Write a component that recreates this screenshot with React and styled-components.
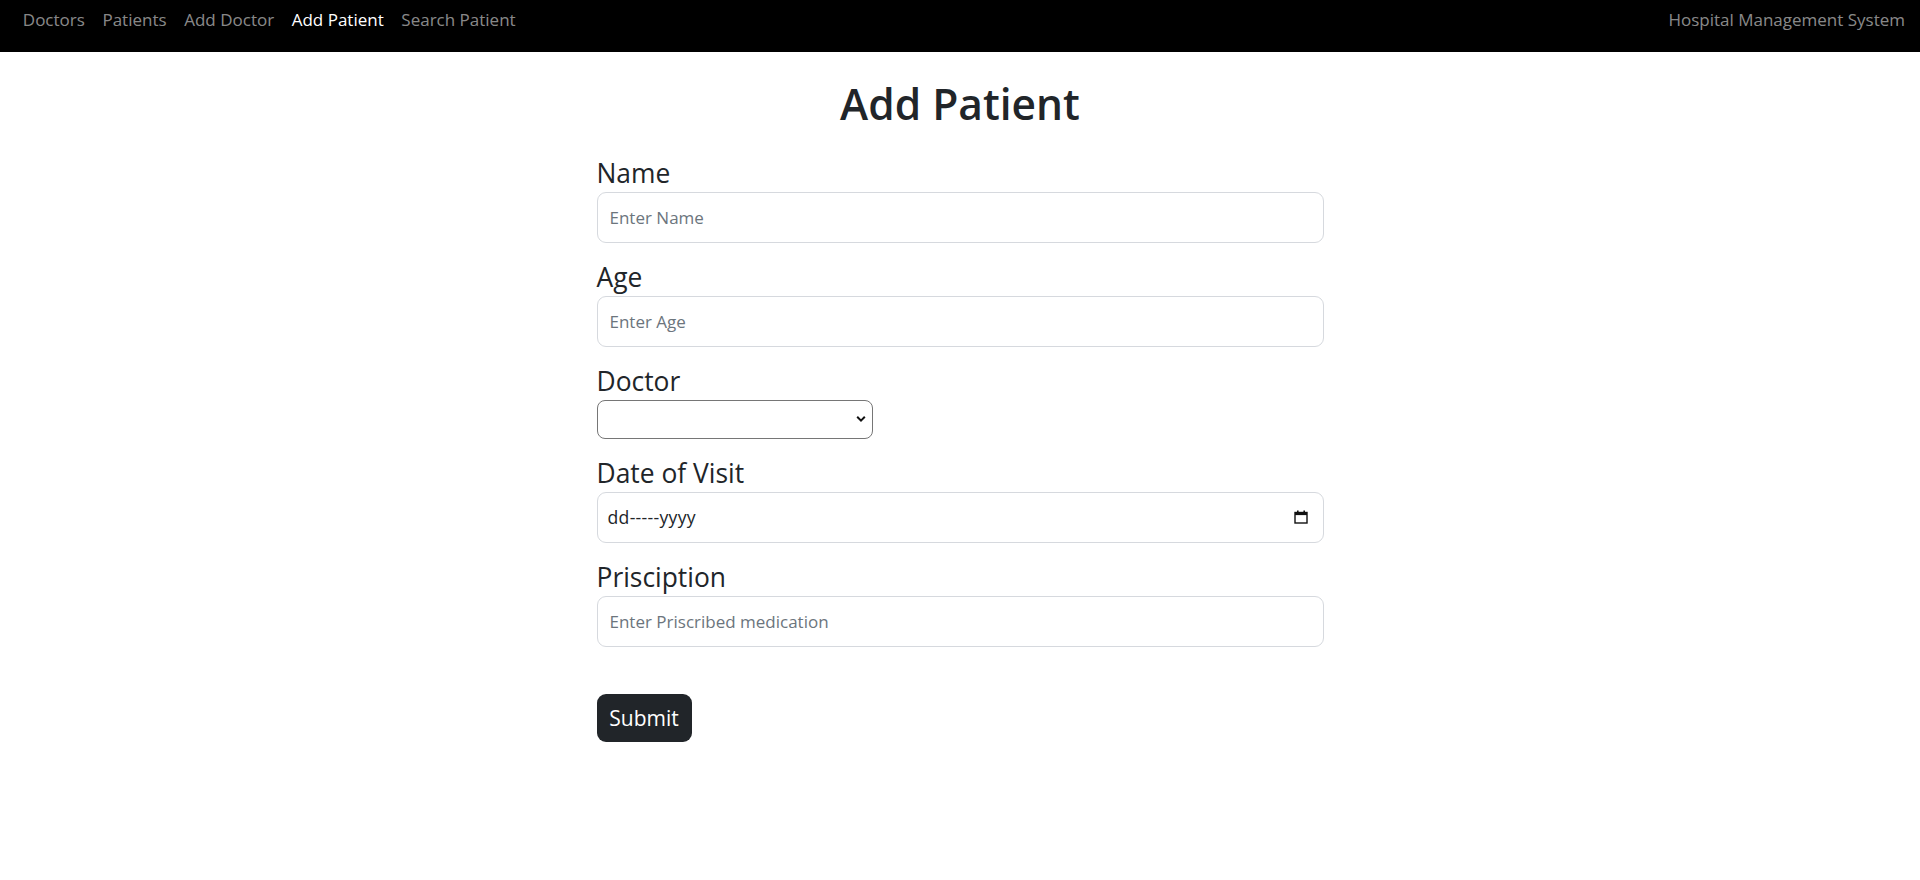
import React from 'react';
import styled, { createGlobalStyle } from 'styled-components';

const FONT = '"Open Sans", "Noto Sans", Arial, sans-serif';

const GlobalStyle = createGlobalStyle`
  * {
    box-sizing: border-box;
  }
  body {
    margin: 0;
    background: #fff;
    color: #212529;
    font-family: ${FONT};
  }
`;

const NavBar = styled.nav`
  height: 52px;
  background: #000;
  display: flex;
  justify-content: space-between;
  align-items: flex-start;
  padding: 7px 15px 0 14px;
  font-size: 17px;
  line-height: 26.4px;
`;

const NavList = styled.div`
  display: flex;
`;

const NavLink = styled.a`
  padding: 0 8.8px;
  color: ${(p) => (p.$active ? '#fff' : 'rgba(255, 255, 255, 0.55)')};
  text-decoration: none;
  cursor: pointer;
`;

const Brand = styled.span`
  color: rgba(255, 255, 255, 0.55);
`;

const Page = styled.main`
  width: 727px;
  margin: 0 auto;
`;

const Title = styled.h1`
  margin: 26px 0 26px;
  text-align: center;
  font-size: 42.5px;
  line-height: 52.8px;
  font-weight: 600;
  color: #212529;
`;

const Group = styled.div`
  margin-bottom: 18px;
`;

const Label = styled.label`
  display: block;
  font-size: 26.4px;
  line-height: 32px;
  margin-bottom: 3px;
  color: #212529;
`;

const TextInput = styled.input`
  display: block;
  width: 100%;
  height: 51px;
  padding: 0 12px;
  border: 1px solid #d6d9de;
  border-radius: 9px;
  font-family: ${FONT};
  font-size: 17px;
  color: #212529;
  outline: none;
  &::placeholder {
    color: #6c757d;
  }
`;

const SelectBox = styled.div`
  position: relative;
  width: 276px;
  height: 39px;
`;

const Select = styled.select`
  appearance: none;
  width: 100%;
  height: 100%;
  border: 1px solid #767676;
  border-radius: 8px;
  background: #fff;
  font-family: ${FONT};
  font-size: 17px;
  padding: 0 30px 0 8px;
  outline: none;
`;

const Chevron = styled.svg`
  position: absolute;
  right: 7px;
  top: 15px;
  width: 10px;
  height: 8px;
  pointer-events: none;
`;

const DateField = styled.div`
  display: flex;
  align-items: center;
  justify-content: space-between;
  height: 51px;
  padding: 0 15px 0 10px;
  border: 1px solid #d6d9de;
  border-radius: 9px;
  font-size: 17.6px;
  letter-spacing: 0.3px;
  color: #212529;
`;

const SubmitButton = styled.button`
  margin-top: 29px;
  width: 95px;
  height: 48px;
  border: none;
  border-radius: 9px;
  background: #212529;
  color: #fff;
  font-family: ${FONT};
  font-size: 21px;
  cursor: pointer;
`;

function CalendarIcon() {
  return (
    <svg width="14" height="14" viewBox="0 0 14 14" fill="none">
      <rect x="1" y="2.5" width="12" height="10.5" stroke="#111" strokeWidth="1.4" />
      <rect x="1" y="2.5" width="12" height="2.6" fill="#111" />
      <rect x="3" y="0.5" width="1.6" height="2.5" fill="#111" />
      <rect x="9.4" y="0.5" width="1.6" height="2.5" fill="#111" />
    </svg>
  );
}

const links = ['Doctors', 'Patients', 'Add Doctor', 'Add Patient', 'Search Patient'];

export default function App() {
  return (
    <>
      <GlobalStyle />
      <NavBar>
        <NavList>
          {links.map((l) => (
            <NavLink key={l} $active={l === 'Add Patient'}>
              {l}
            </NavLink>
          ))}
        </NavList>
        <Brand>Hospital Management System</Brand>
      </NavBar>
      <Page>
        <Title>Add Patient</Title>
        <form onSubmit={(e) => e.preventDefault()}>
          <Group>
            <Label>Name</Label>
            <TextInput type="text" placeholder="Enter Name" />
          </Group>
          <Group>
            <Label>Age</Label>
            <TextInput type="text" placeholder="Enter Age" />
          </Group>
          <Group>
            <Label>Doctor</Label>
            <SelectBox>
              <Select defaultValue="">
                <option value=""></option>
              </Select>
              <Chevron viewBox="0 0 10 8">
                <path d="M1.2 1.8 L5 5.6 L8.8 1.8" stroke="#111" strokeWidth="2" fill="none" />
              </Chevron>
            </SelectBox>
          </Group>
          <Group>
            <Label>Date of Visit</Label>
            <DateField>
              <span>dd-----yyyy</span>
              <CalendarIcon />
            </DateField>
          </Group>
          <Group>
            <Label>Prisciption</Label>
            <TextInput type="text" placeholder="Enter Priscribed medication" />
          </Group>
          <SubmitButton type="submit">Submit</SubmitButton>
        </form>
      </Page>
    </>
  );
}
